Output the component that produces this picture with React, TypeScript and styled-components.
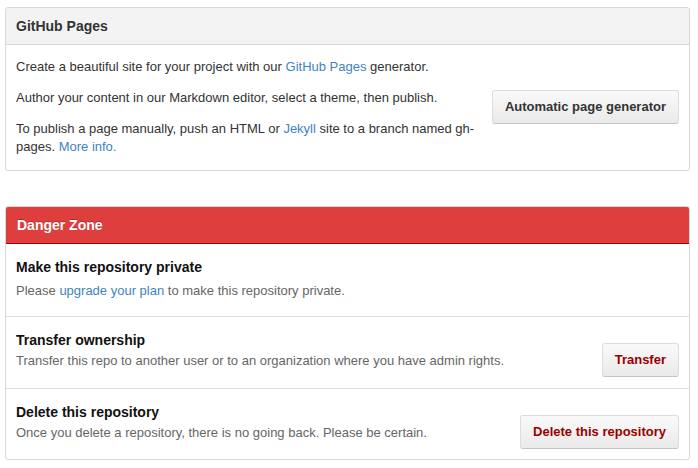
import styled, { createGlobalStyle } from 'styled-components';

const GlobalStyle = createGlobalStyle`
  body {
    margin: 0;
    background: #fff;
    font-family: "Liberation Sans", Arial, Helvetica, sans-serif;
    font-size: 13px;
    color: #333;
  }
`;

const Page = styled.div`
  padding: 7px 8px 8px 5px;
  display: flex;
  flex-direction: column;
  gap: 35px;
`;

const Box = styled.section`
  border: 1px solid #d8d8d8;
  border-radius: 3px;
  background: #fff;
  overflow: hidden;
`;

const BoxHeader = styled.h3<{ $danger?: boolean }>`
  margin: 0;
  padding: 9px 10px;
  font-size: 14px;
  line-height: 18px;
  font-weight: bold;
  color: ${(p) => (p.$danger ? '#fff' : '#333')};
  background: ${(p) => (p.$danger ? '#df3e3e' : '#f3f3f3')};
  border-bottom: 1px solid ${(p) => (p.$danger ? '#b00000' : '#d8d8d8')};
  ${(p) =>
    p.$danger &&
    `
    margin: -1px -1px 0;
    border: 1px solid #b00000;
    text-shadow: 0 -1px 0 rgba(0,0,0,0.25);
    padding: 9px 11px;
  `}
`;

const PagesBody = styled.div`
  display: flex;
  align-items: center;
  padding: 13px 10px 14px;
  gap: 10px;
`;

const PagesText = styled.div`
  flex: 1;
`;

const Para = styled.p`
  margin: 0 0 13px;
  line-height: 18px;
  &:last-child {
    margin-bottom: 0;
  }
`;

const Link = styled.a`
  color: #4183c4;
  text-decoration: none;
`;

const Button = styled.button<{ $danger?: boolean }>`
  font-family: inherit;
  font-size: 13px;
  font-weight: bold;
  line-height: 18px;
  padding: 7px 12px;
  color: ${(p) => (p.$danger ? '#990000' : '#333')};
  background: linear-gradient(#fafafa, #eaeaea);
  border: 1px solid #ddd;
  border-bottom-color: #c5c5c5;
  border-radius: 3px;
  white-space: nowrap;
  cursor: pointer;
`;

const Row = styled.div`
  display: grid;
  grid-template-columns: 1fr auto;
  column-gap: 10px;
  padding: 14px 10px 18px;
  & + & {
    border-top: 1px solid #e1e1e1;
  }
  &:first-of-type {
    padding-bottom: 16px;
  }
  &:last-child {
    padding-bottom: 17px;
  }
`;

const RowTitle = styled.h4<{ $spaced?: boolean }>`
  margin: 0 0 ${(p) => (p.$spaced ? '6px' : '3px')};
  font-size: 14px;
  line-height: 18px;
  font-weight: bold;
  color: #111;
`;

const RowDesc = styled.p`
  grid-column: 1;
  margin: 0;
  line-height: 18px;
  color: #666;
`;

const RowButton = styled(Button)`
  grid-column: 2;
  grid-row: 1 / span 2;
  align-self: end;
  margin-bottom: -7px;
`;

const dangerRows = [
  {
    title: 'Make this repository private',
    desc: (
      <>
        Please <Link href="#">upgrade your plan</Link> to make this repository private.
      </>
    ),
  },
  {
    title: 'Transfer ownership',
    desc: 'Transfer this repo to another user or to an organization where you have admin rights.',
    action: 'Transfer',
  },
  {
    title: 'Delete this repository',
    desc: 'Once you delete a repository, there is no going back. Please be certain.',
    action: 'Delete this repository',
  },
];

export default function App() {
  return (
    <>
      <GlobalStyle />
      <Page>
        <Box>
          <BoxHeader>GitHub Pages</BoxHeader>
          <PagesBody>
            <PagesText>
              <Para>
                Create a beautiful site for your project with our <Link href="#">GitHub Pages</Link> generator.
              </Para>
              <Para>Author your content in our Markdown editor, select a theme, then publish.</Para>
              <Para>
                To publish a page manually, push an HTML or <Link href="#">Jekyll</Link> site to a branch named
                gh-pages. <Link href="#">More info.</Link>
              </Para>
            </PagesText>
            <Button>Automatic page generator</Button>
          </PagesBody>
        </Box>

        <Box>
          <BoxHeader $danger>Danger Zone</BoxHeader>
          {dangerRows.map((r) => (
            <Row key={r.title}>
              <RowTitle $spaced={!r.action}>{r.title}</RowTitle>
              <RowDesc>{r.desc}</RowDesc>
              {r.action && <RowButton $danger>{r.action}</RowButton>}
            </Row>
          ))}
        </Box>
      </Page>
    </>
  );
}
